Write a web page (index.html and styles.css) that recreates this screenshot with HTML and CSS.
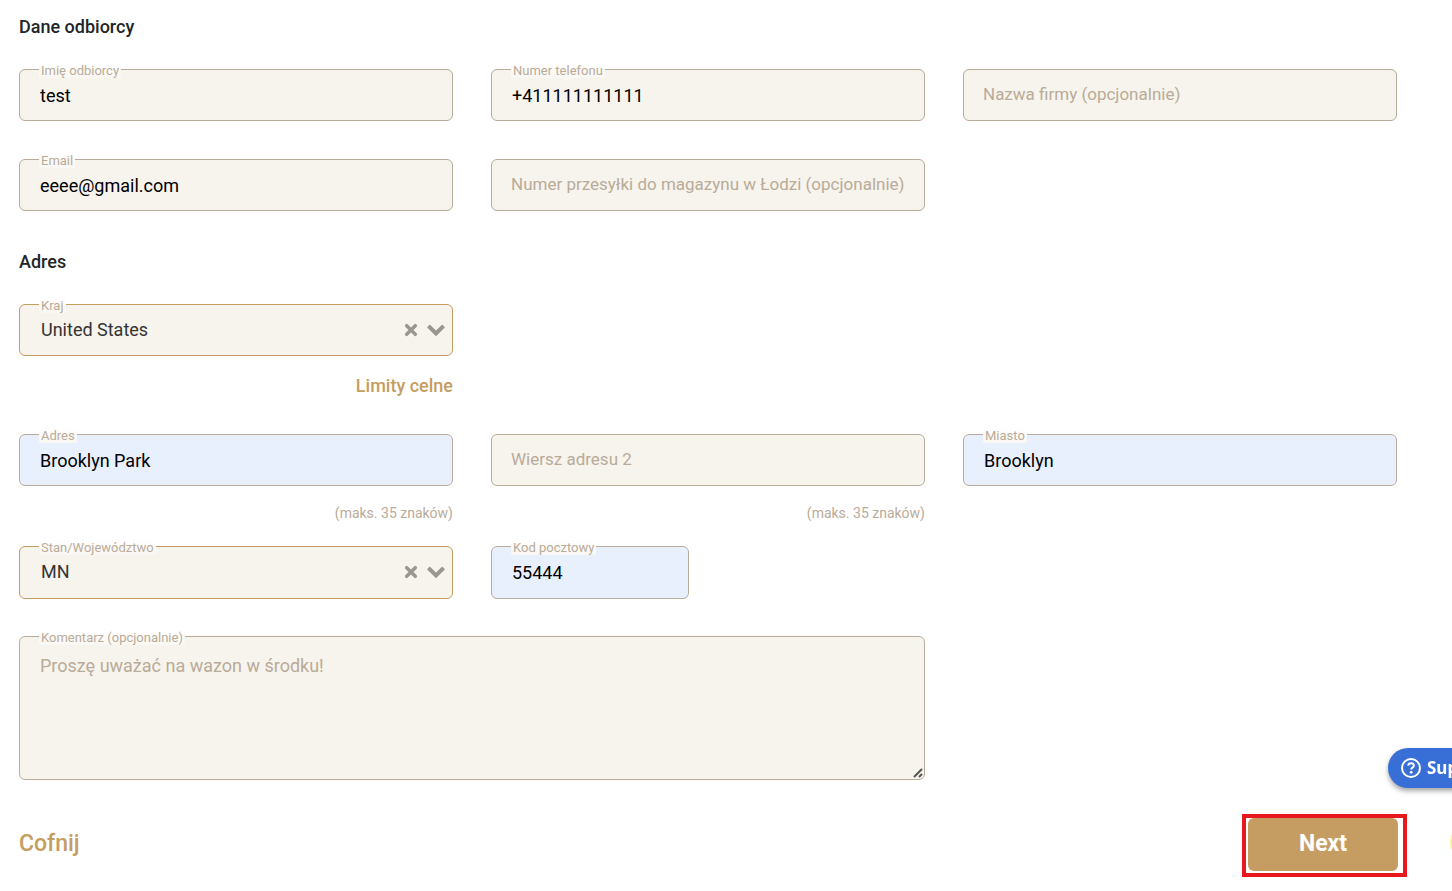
FILE: index.html
```html
<!DOCTYPE html>
<html lang="pl">
<head>
<meta charset="utf-8">
<meta name="viewport" content="width=device-width, initial-scale=1">
<title>Dane odbiorcy</title>
<link rel="stylesheet" href="styles.css">
</head>
<body>
<form class="form">
  <h2 class="title">Dane odbiorcy</h2>
  <div class="grid">
    <div class="field">
      <label class="label" for="name">Imię odbiorcy</label>
      <input class="control" id="name" type="text" value="test">
    </div>
    <div class="field">
      <label class="label" for="phone">Numer telefonu</label>
      <input class="control" id="phone" type="tel" value="+411111111111">
    </div>
    <div class="field">
      <input class="control empty" type="text" aria-label="Nazwa firmy (opcjonalnie)" placeholder="Nazwa firmy (opcjonalnie)">
    </div>
    <div class="field">
      <label class="label" for="email">Email</label>
      <input class="control" id="email" type="email" value="eeee@gmail.com">
    </div>
    <div class="field">
      <input class="control empty" type="text" aria-label="Numer przesyłki do magazynu w Łodzi (opcjonalnie)" placeholder="Numer przesyłki do magazynu w Łodzi (opcjonalnie)">
    </div>
  </div>

  <h2 class="title title-next">Adres</h2>
  <div class="grid">
    <div class="field">
      <label class="label" for="country">Kraj</label>
      <select class="control select" id="country"><option>United States</option></select>
      <div class="tools">
        <button class="clear" type="button" aria-label="Wyczyść kraj"><svg width="14" height="14" viewBox="0 0 14 14"><path d="M2.7 2.7 11.3 11.3M11.3 2.7 2.7 11.3"/></svg></button>
        <svg width="18" height="14" viewBox="0 0 18 14"><path d="M1.4 2.8 9 10.4 16.6 2.8"/></svg>
      </div>
      <a class="limits" href="#">Limity celne</a>
    </div>
  </div>

  <div class="grid address">
    <div class="field">
      <label class="label" for="street">Adres</label>
      <input class="control filled" id="street" type="text" value="Brooklyn Park">
      <p class="hint">(maks. 35 znaków)</p>
    </div>
    <div class="field">
      <input class="control empty" type="text" aria-label="Wiersz adresu 2" placeholder="Wiersz adresu 2">
      <p class="hint">(maks. 35 znaków)</p>
    </div>
    <div class="field">
      <label class="label" for="city">Miasto</label>
      <input class="control filled" id="city" type="text" value="Brooklyn">
    </div>
  </div>

  <div class="grid region">
    <div class="field">
      <label class="label" for="state">Stan/Województwo</label>
      <select class="control select" id="state"><option>MN</option></select>
      <div class="tools">
        <button class="clear" type="button" aria-label="Wyczyść stan"><svg width="14" height="14" viewBox="0 0 14 14"><path d="M2.7 2.7 11.3 11.3M11.3 2.7 2.7 11.3"/></svg></button>
        <svg width="18" height="14" viewBox="0 0 18 14"><path d="M1.4 2.8 9 10.4 16.6 2.8"/></svg>
      </div>
    </div>
    <div class="field short">
      <label class="label" for="zip">Kod pocztowy</label>
      <input class="control filled" id="zip" type="text" value="55444">
    </div>
    <div class="field wide">
      <label class="label" for="comment">Komentarz (opcjonalnie)</label>
      <textarea class="control comment" id="comment" placeholder="Proszę uważać na wazon w środku!"></textarea>
      <svg class="grip" width="10" height="10" viewBox="0 0 10 10"><path d="M1 9 9 1M6 9 9 6"/></svg>
    </div>
  </div>

  <div class="footer">
    <button class="back" type="button">Cofnij</button>
    <div class="frame"><button class="next" type="submit">Next</button></div>
  </div>
</form>

<button class="support" type="button">
  <svg width="20" height="20" viewBox="0 0 20 20"><circle cx="10" cy="10" r="9"/><path class="hook" d="M7.1 7.7C7.3 6 8.5 5.2 10 5.2c1.7 0 2.9 1 2.9 2.4 0 1.9-2.7 1.9-2.7 3.9"/><circle class="dot" cx="10.2" cy="14.3" r="1.4"/></svg>
  Support
</button>
<div class="spot"></div>
</body>
</html>
```
FILE: styles.css
```css
* { box-sizing: border-box; }

body {
  margin: 0;
  background: #fff;
  color: #212529;
  font-family: Roboto, "Liberation Sans", sans-serif;
  font-size: 18px;
  line-height: 24px;
}

button, input, select, textarea { font: inherit; }

.form { padding: 15px 55px 14px 19px; }

.title {
  margin: 0 0 30px;
  font-size: 18px;
  font-weight: 500;
}

.title-next { margin-top: 39px; }

.grid {
  display: grid;
  grid-template-columns: repeat(3, minmax(0, 1fr));
  gap: 38px;
}

.address { margin-top: 36px; }

.region {
  row-gap: 37px;
  margin-top: 23px;
}

.field { position: relative; }
.short { width: 198px; }
.wide { grid-column: span 2; }

.control {
  display: block;
  width: 100%;
  height: 52px;
  margin: 0;
  padding: 0 20px;
  border: 1px solid #b9ab99;
  border-radius: 6px;
  outline: 0;
  background: #f7f4ed;
  color: #000;
}

.control::placeholder { color: #b9ab99; opacity: 1; }

.control.empty {
  padding: 0 7px 2px 19px;
  font-size: 17px;
}

.filled { background: #e8f0fe; }
.region .control { height: 53px; }

.select {
  appearance: none;
  padding: 0 70px 0 21px;
  border-color: #c59d5f;
  color: #333;
}

.region .select { padding-bottom: 2px; }

.region .comment {
  height: 144px;
  padding: 17px 20px;
  resize: both;
}

.comment::-webkit-resizer { background: none; }

.grip {
  position: absolute;
  right: 2px;
  bottom: 2px;
  fill: none;
  stroke: #555;
  stroke-width: 2;
  pointer-events: none;
}

.label {
  position: absolute;
  top: -6px;
  left: 20px;
  padding: 0 2px;
  border-radius: 2px;
  background: linear-gradient(#fff, #f9f7f2);
  color: #b9ab99;
  font-size: 13px;
  line-height: 15px;
}

.tools {
  position: absolute;
  top: 0;
  right: 8px;
  display: flex;
  align-items: center;
  gap: 9px;
  height: 52px;
  pointer-events: none;
}

.tools svg {
  display: block;
  fill: none;
  stroke: #999792;
  stroke-width: 4;
}

.clear {
  padding: 0;
  border: 0;
  background: none;
  pointer-events: auto;
}

.clear path { stroke-linecap: round; stroke-width: 3.5; }

.limits {
  display: block;
  margin-top: 18px;
  color: #c59d5f;
  font-weight: 500;
  text-align: right;
  text-decoration: none;
}

.hint {
  margin: 17px 0 0;
  color: #b9ab99;
  font-size: 14px;
  line-height: 20px;
  text-align: right;
}

.footer {
  display: flex;
  justify-content: space-between;
  align-items: center;
  margin-top: 34px;
}

.back {
  padding: 0 0 4px;
  border: 0;
  background: none;
  color: #c59d5f;
  font-size: 23px;
  font-weight: 500;
}

.frame {
  margin-right: -10px;
  padding: 0 5px 2px 2px;
  border: 4px solid #e8191c;
}

.next {
  display: block;
  width: 150px;
  height: 53px;
  padding: 0 0 2px;
  border: 0;
  border-radius: 6px;
  background: #c59d63;
  color: #fff;
  font-size: 23px;
  font-weight: 700;
}

.support {
  position: fixed;
  left: calc(100% - 64px);
  bottom: 103px;
  display: flex;
  align-items: center;
  gap: 6px;
  height: 40px;
  padding: 0 20px 0 13px;
  border: 0;
  border-radius: 20px;
  background: #386fd6;
  box-shadow: 0 3px 5px rgba(0, 0, 0, 0.35);
  color: #fff;
  font-family: "Noto Sans", "Open Sans", sans-serif;
  font-size: 17px;
  font-weight: 700;
}

.support svg { fill: none; stroke: #fff; stroke-width: 2; }
.support .dot { fill: #fff; stroke: none; }

.spot {
  position: fixed;
  left: calc(100% - 2px);
  bottom: 31px;
  width: 36px;
  height: 36px;
  border-radius: 50%;
  background: #fdf0a4;
}
```
